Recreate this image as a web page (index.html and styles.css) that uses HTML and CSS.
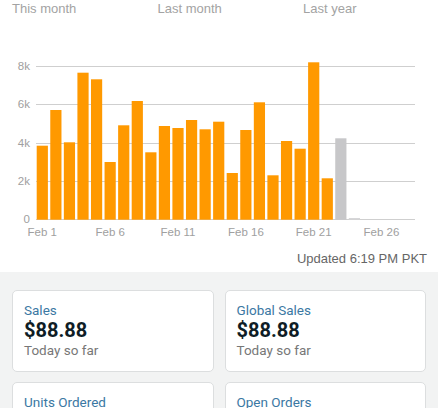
FILE: index.html
```html
<!DOCTYPE html>
<html>
<head>
<meta charset="utf-8">
<link rel="stylesheet" href="styles.css">
</head>
<body>
<div class="page">
  <div class="tabs">
    <div class="tab">This month</div>
    <div class="tab">Last month</div>
    <div class="tab">Last year</div>
  </div>
  <svg class="chart" width="438" height="225" viewBox="0 20 438 225">
    <g class="grid">
      <line x1="36" y1="66.5" x2="415" y2="66.5"/>
      <line x1="36" y1="104.5" x2="415" y2="104.5"/>
      <line x1="36" y1="143.5" x2="415" y2="143.5"/>
      <line x1="36" y1="181.5" x2="415" y2="181.5"/>
      <line x1="36" y1="219.5" x2="415" y2="219.5"/>
    </g>
    <g class="ylab">
      <text x="30" y="70">8k</text>
      <text x="30" y="108">6k</text>
      <text x="30" y="147">4k</text>
      <text x="30" y="185">2k</text>
      <text x="30" y="223">0</text>
    </g>
    <g class="bars">
      <rect x="36.7" y="145.7" width="11.2" height="74"/>
      <rect x="50.27" y="110" width="11.2" height="109.7"/>
      <rect x="63.84" y="142.3" width="11.2" height="77.4"/>
      <rect x="77.41" y="72.7" width="11.2" height="147"/>
      <rect x="90.98" y="79.3" width="11.2" height="140.4"/>
      <rect x="104.55" y="162" width="11.2" height="57.7"/>
      <rect x="118.12" y="125.3" width="11.2" height="94.4"/>
      <rect x="131.69" y="101" width="11.2" height="118.7"/>
      <rect x="145.26" y="152.3" width="11.2" height="67.4"/>
      <rect x="158.83" y="126" width="11.2" height="93.7"/>
      <rect x="172.4" y="128" width="11.2" height="91.7"/>
      <rect x="185.97" y="120" width="11.2" height="99.7"/>
      <rect x="199.54" y="129.3" width="11.2" height="90.4"/>
      <rect x="213.11" y="121.7" width="11.2" height="98"/>
      <rect x="226.68" y="173" width="11.2" height="46.7"/>
      <rect x="240.25" y="130" width="11.2" height="89.7"/>
      <rect x="253.82" y="102.3" width="11.2" height="117.4"/>
      <rect x="267.39" y="175.3" width="11.2" height="44.4"/>
      <rect x="280.96" y="141" width="11.2" height="78.7"/>
      <rect x="294.53" y="148.7" width="11.2" height="71"/>
      <rect x="308.1" y="62.3" width="11.2" height="157.4"/>
      <rect x="321.67" y="178.3" width="11.2" height="41.4"/>
      <rect class="future" x="335.24" y="138.3" width="11.2" height="81.4"/>
      <rect class="tiny" x="348.81" y="218" width="11.2" height="1.6"/>
    </g>
    <g class="xlab">
      <text x="42.3" y="236">Feb 1</text>
      <text x="110.2" y="236">Feb 6</text>
      <text x="178" y="236">Feb 11</text>
      <text x="245.9" y="236">Feb 16</text>
      <text x="313.7" y="236">Feb 21</text>
      <text x="381.5" y="236">Feb 26</text>
    </g>
  </svg>
  <div class="updated">Updated 6:19 PM PKT</div>
  <div class="tiles">
    <div class="card">
      <div class="label">Sales</div>
      <div class="value">$88.88</div>
      <div class="sub">Today so far</div>
    </div>
    <div class="card">
      <div class="label">Global Sales</div>
      <div class="value">$88.88</div>
      <div class="sub">Today so far</div>
    </div>
    <div class="card">
      <div class="label">Units Ordered</div>
    </div>
    <div class="card">
      <div class="label">Open Orders</div>
    </div>
  </div>
</div>
</body>
</html>
```

FILE: styles.css
```css
html, body {
  margin: 0;
  padding: 0;
  background: #ffffff;
}
body {
  width: 438px;
  height: 408px;
  overflow: hidden;
}
.page {
  display: flex;
  flex-direction: column;
  height: 408px;
  overflow: hidden;
}
.tabs {
  display: grid;
  grid-template-columns: 145.5px 145.5px 1fr;
  padding-left: 12px;
  height: 20px;
  flex: none;
  font-family: "Liberation Sans", Arial, sans-serif;
  font-size: 13px;
  line-height: 18px;
  color: #a3a3a3;
}
.chart {
  display: block;
  flex: none;
  font-family: "Liberation Sans", Arial, sans-serif;
}
.grid line {
  stroke: #cfcfcf;
  stroke-width: 1;
}
.ylab text {
  font-size: 11.5px;
  fill: #a0a0a0;
  text-anchor: end;
}
.xlab text {
  font-size: 11.5px;
  fill: #a0a0a0;
  text-anchor: middle;
}
.bars rect {
  fill: #ff9900;
}
.bars rect.future {
  fill: #c7c7c9;
}
.bars rect.tiny {
  fill: #d6d6d8;
}
.updated {
  height: 27px;
  flex: none;
  padding-right: 11px;
  text-align: right;
  font-family: "Liberation Sans", Arial, sans-serif;
  font-size: 13px;
  line-height: 27px;
  color: #666666;
}
.tiles {
  background: #f2f3f3;
  display: grid;
  grid-template-columns: 1fr 1fr;
  grid-auto-rows: 82px;
  column-gap: 11px;
  row-gap: 10px;
  padding: 18px 12px 0 12px;
  flex: 1;
  min-height: 0;
  overflow: hidden;
}
.card {
  background: #ffffff;
  border: 1px solid #dcdedf;
  border-radius: 5px;
  box-sizing: border-box;
  padding: 11px 11px 0 11px;
  display: flex;
  flex-direction: column;
  font-family: Roboto, "Noto Sans", sans-serif;
}
.label {
  font-size: 13.5px;
  line-height: 16px;
  color: #3b78a3;
}
.value {
  font-size: 20px;
  line-height: 24px;
  font-weight: 700;
  color: #0f1d26;
}
.sub {
  font-size: 13.5px;
  line-height: 16px;
  color: #777777;
}
```
